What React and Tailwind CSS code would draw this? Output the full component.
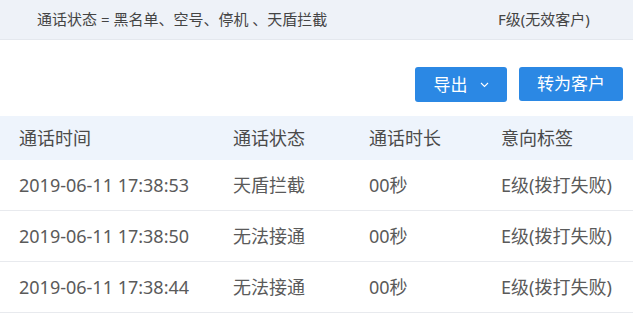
import React from "react";

const rows = [
  ["2019-06-11 17:38:53", "天盾拦截", "00秒", "E级(拨打失败)"],
  ["2019-06-11 17:38:50", "无法接通", "00秒", "E级(拨打失败)"],
  ["2019-06-11 17:38:44", "无法接通", "00秒", "E级(拨打失败)"],
];

export default function App() {
  return (
    <div
      className="w-[643px] h-[314px] bg-white overflow-hidden text-[#555]"
      style={{ fontFamily: '"Noto Sans", "Noto Sans CJK SC", sans-serif' }}
    >
      <div className="w-[633px]">
        <div className="h-[40px] bg-[#eef2f8] border-b border-[#e4e8ee] flex items-center text-[15px] text-[#444]">
          <div className="pl-[37px] w-[498px]">通话状态 = 黑名单、空号、停机 、天盾拦截</div>
          <div>F级(无效客户)</div>
        </div>
        <div className="h-[76px] flex items-start justify-end pt-[27px] pr-[10px] gap-[12px]">
          <button className="w-[92px] h-[35px] rounded-[3px] bg-[#2b88e4] text-white text-[17px] flex items-center justify-center gap-[12px]">
            <span>导出</span>
            <svg width="9" height="6" viewBox="0 0 9 6" fill="none">
              <path d="M1 1 L4.5 4.5 L8 1" stroke="white" strokeWidth="1.1" />
            </svg>
          </button>
          <button className="w-[104px] h-[34px] rounded-[3px] bg-[#2b88e4] text-white text-[17px] flex items-center justify-center">
            转为客户
          </button>
        </div>
        <div className="h-[44px] bg-[#eef4fc] flex items-center text-[18px] text-[#4a4a4a]">
          <div className="pl-[19px] w-[233px]">通话时间</div>
          <div className="w-[136px]">通话状态</div>
          <div className="w-[132px]">通话时长</div>
          <div>意向标签</div>
        </div>
        {rows.map((r, i) => (
          <div
            key={i}
            className="h-[51px] border-b border-[#e8eaee] flex items-center text-[18px] text-[#5a5a5a]"
          >
            <div className="pl-[19px] w-[233px]">{r[0]}</div>
            <div className="w-[136px]">{r[1]}</div>
            <div className="w-[132px]">{r[2]}</div>
            <div>{r[3]}</div>
          </div>
        ))}
      </div>
    </div>
  );
}
